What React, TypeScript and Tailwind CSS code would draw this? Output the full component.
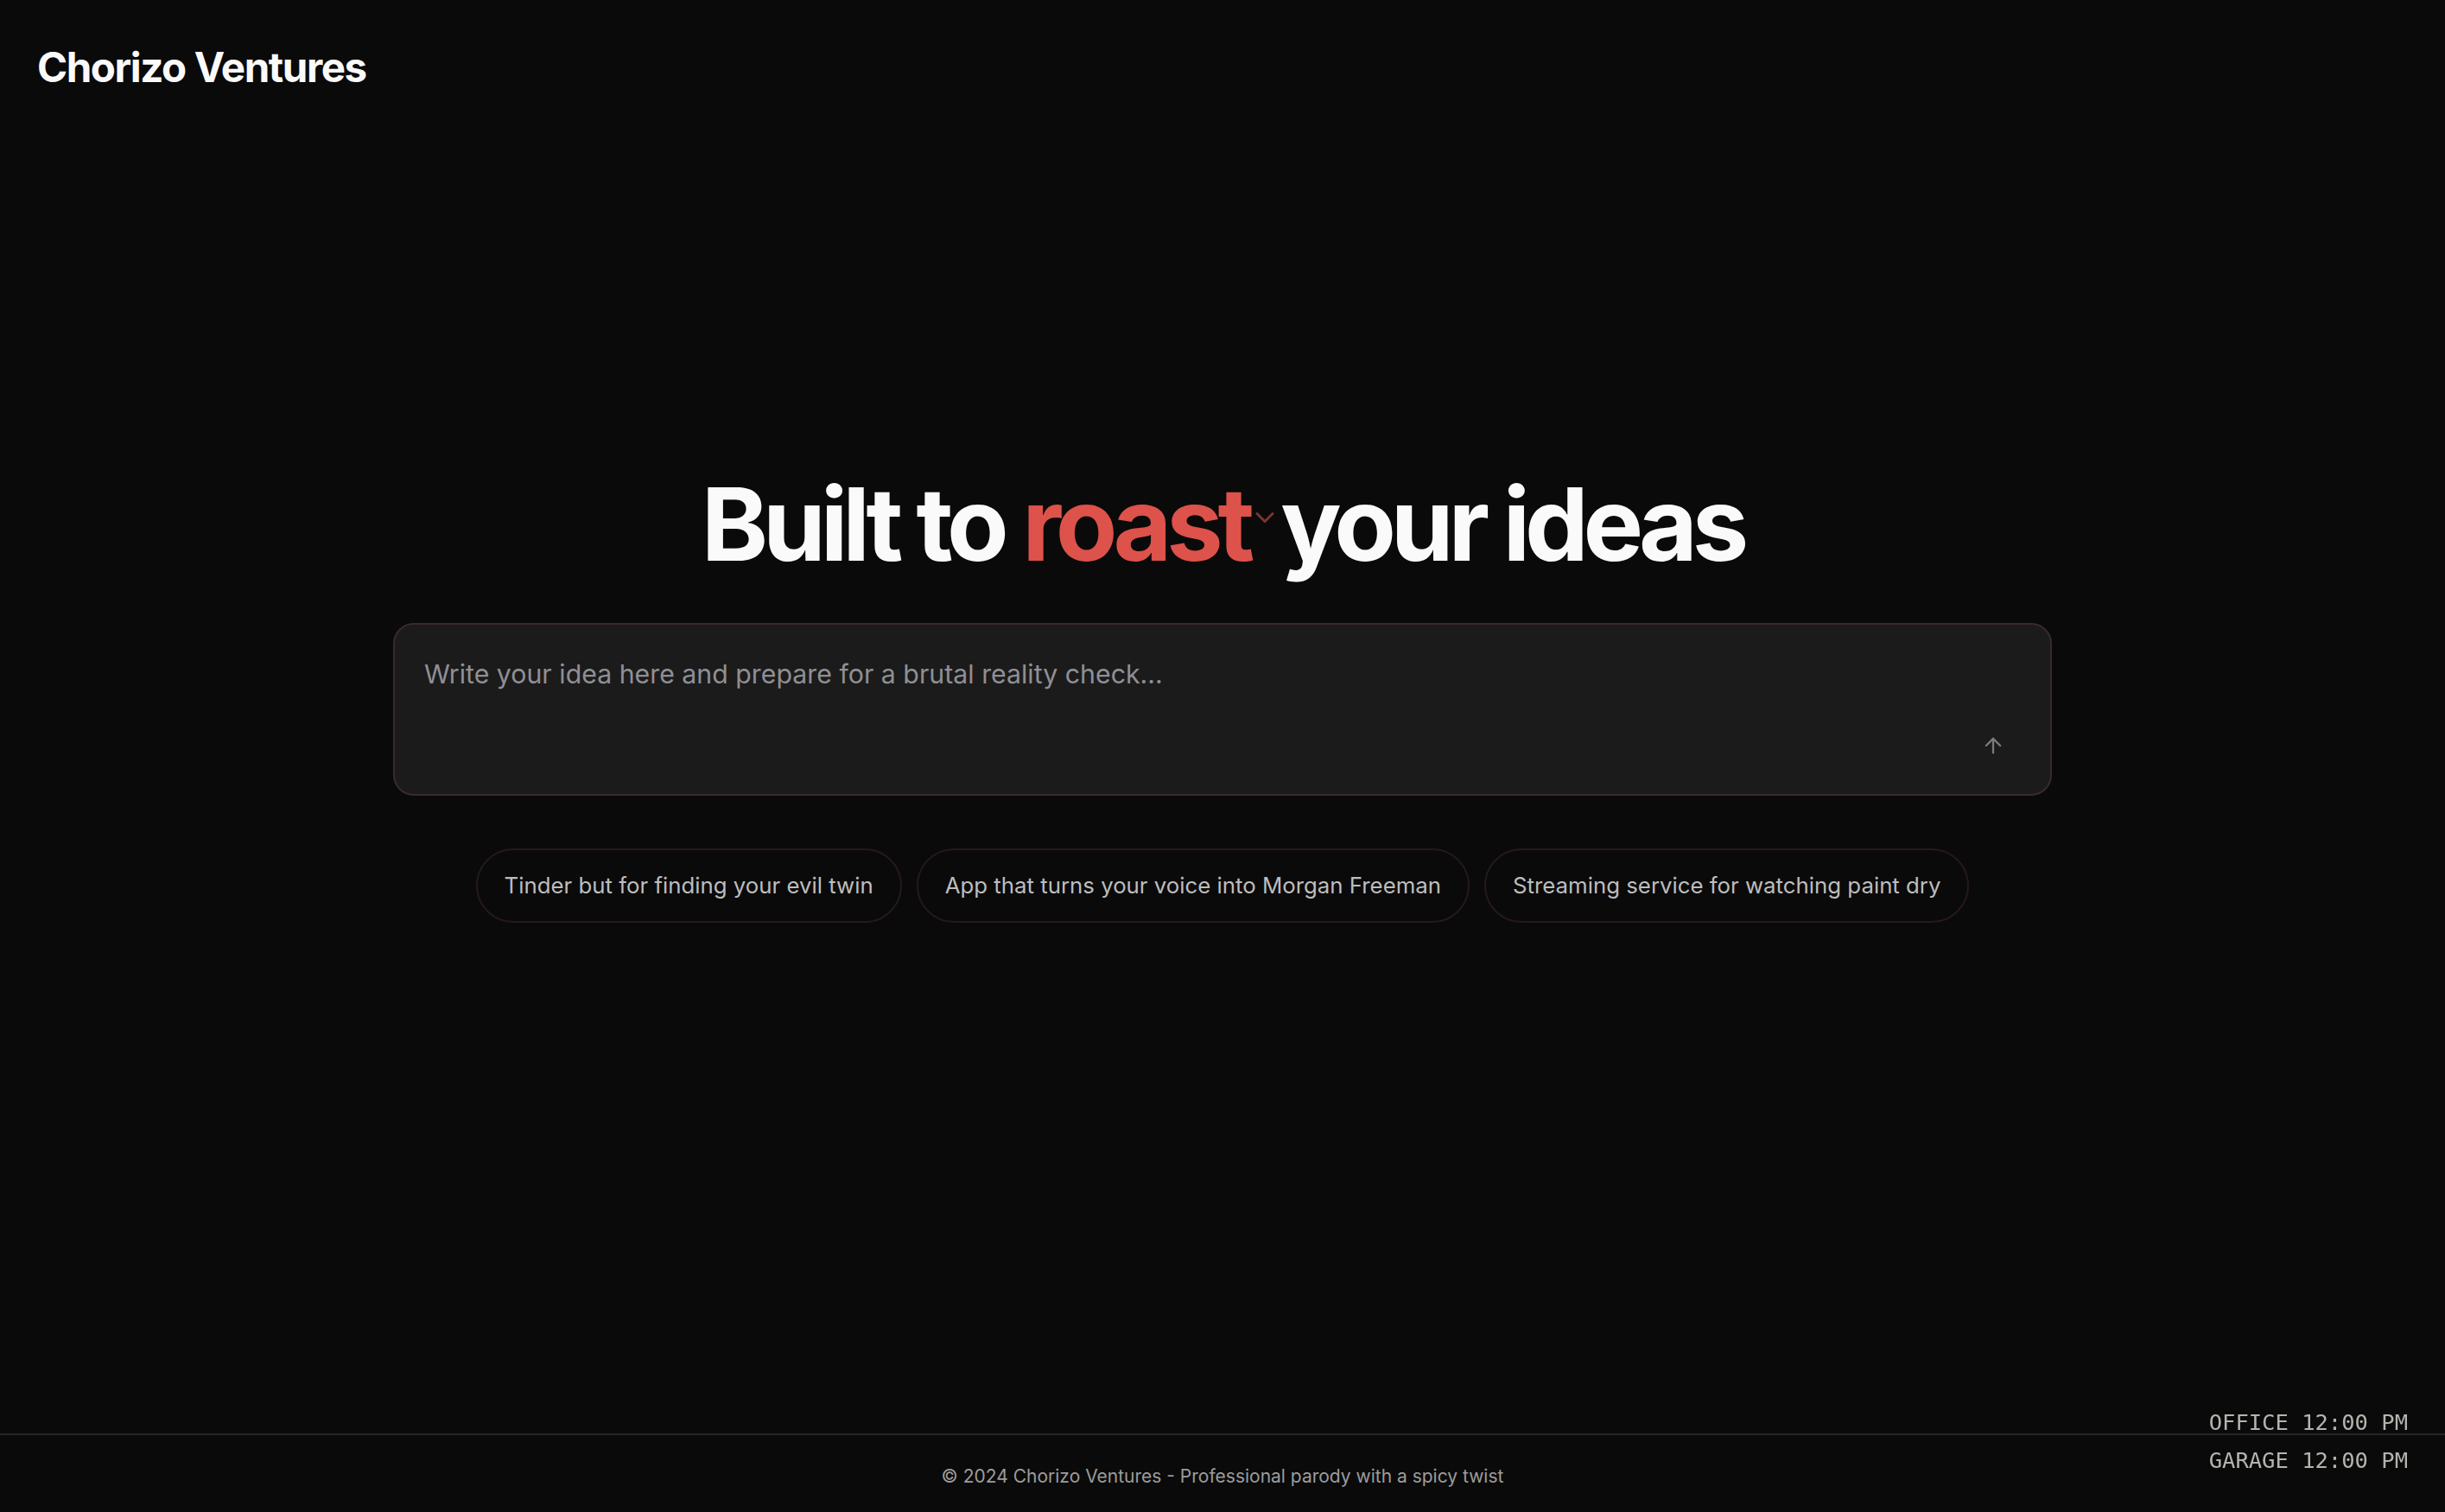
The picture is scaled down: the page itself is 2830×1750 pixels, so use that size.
import { ArrowUp, ChevronDown } from "lucide-react";

const ideas = [
  "Tinder but for finding your evil twin",
  "App that turns your voice into Morgan Freeman",
  "Streaming service for watching paint dry",
];

export default function App() {
  return (
    <div className="min-h-screen flex flex-col bg-[#0a0a0a] text-[#fafafa] font-['Inter',sans-serif]">
      <header className="pl-[43px] pt-[49px]">
        <span className="text-[47.5px] leading-[1.2] font-bold tracking-[-0.03em]">Chorizo Ventures</span>
      </header>

      <main className="flex-1 flex flex-col items-center pt-[442px]">
        <h1 className="text-[117px] leading-none font-bold tracking-[-0.053em] whitespace-nowrap">
          Built to <span className="text-[#dd524a]">roast</span>
          <ChevronDown
            size={36}
            strokeWidth={2}
            className="inline-block align-baseline -translate-y-[32px] text-[#7a3434]"
          />
          your ideas
        </h1>

        <div className="mt-[56px] w-[1920px] h-[200px] flex flex-col rounded-[24px] border-2 border-[#3a2a2b] bg-[#1b1b1b] pl-[34px] pr-[40px] pt-[35px] pb-[30px]">
          <textarea
            className="flex-1 resize-none bg-transparent outline-none text-[30.3px] leading-[45px] text-[#e5e5e5] placeholder:text-[#8f8f95]"
            placeholder="Write your idea here and prepare for a brutal reality check..."
          />
          <div className="flex justify-end">
            <button className="w-[52px] h-[52px] flex items-center justify-center text-[#7a7a7a]">
              <ArrowUp size={28} strokeWidth={2} />
            </button>
          </div>
        </div>

        <div className="mt-[61px] flex gap-[17px]">
          {ideas.map((idea) => (
            <button
              key={idea}
              className="h-[86px] px-[31px] flex items-center rounded-full border-2 border-[#26191a] text-[25.8px] text-[#bdbdbd]"
            >
              {idea}
            </button>
          ))}
        </div>
      </main>

      <footer className="h-[91px] border-t-2 border-[#262626] flex items-center justify-center pt-[6px]">
        <span className="text-[21px] text-[#9c9c9c]">
          © 2024 Chorizo Ventures - Professional parody with a spicy twist
        </span>
      </footer>

      <div className="fixed right-[43px] bottom-[38px] font-['DejaVu_Sans_Mono',monospace] text-[25.5px] leading-[44px] text-[#b5b3ae]">
        <div>OFFICE 12:00 PM</div>
        <div>GARAGE 12:00 PM</div>
      </div>
    </div>
  );
}
